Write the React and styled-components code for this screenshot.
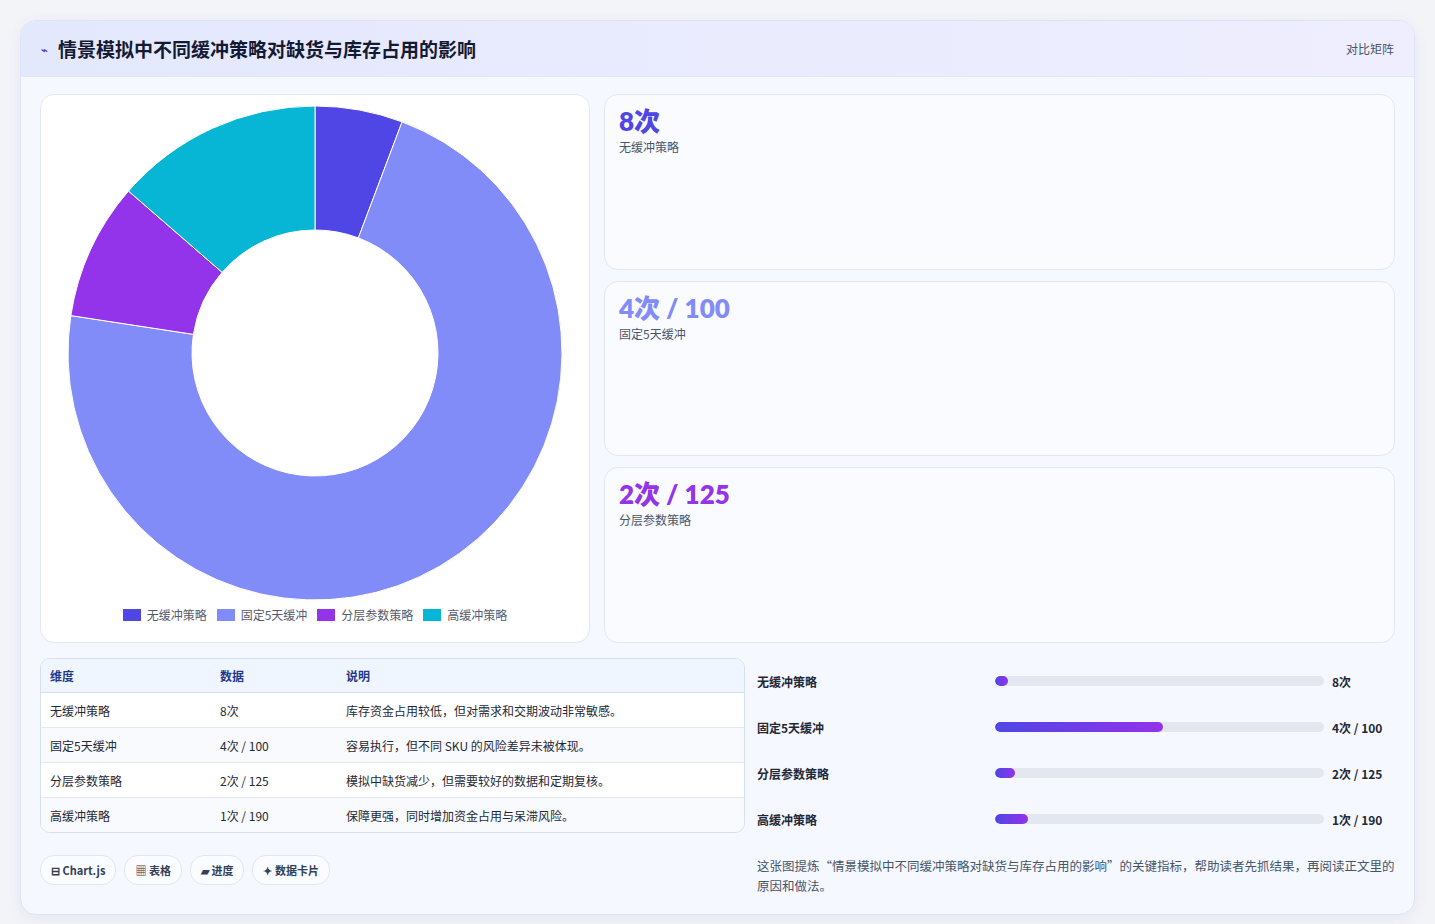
import React from "react";
import styled, { createGlobalStyle } from "styled-components";

const Global = createGlobalStyle`
  body{margin:0;background:#f3f4f8;font-family:"Noto Sans CJK SC","Noto Sans",sans-serif;color:#1e293b;}
`;
const Page = styled.div`padding:20px 20px 22px 20px;`;
const Card = styled.div`
  background:#f6f8ff;border:1px solid #dfe3f7;border-radius:16px;overflow:hidden;
  box-shadow:0 4px 14px rgba(80,90,160,.08);
`;
const Header = styled.div`
  height:55px;display:flex;align-items:center;justify-content:space-between;padding:0 20px 0 20px;
  background:linear-gradient(90deg,#e4e8fd,#eeeefe);border-bottom:1px solid #e3e6f6;
`;
const Title = styled.h1`margin:0;font-size:19px;font-weight:700;color:#141a33;display:flex;align-items:center;gap:10px;`;
const Mark = styled.span`color:#4f46e5;font-size:11px;`;
const HeaderRight = styled.span`font-size:12px;color:#475569;`;
const Body = styled.div`padding:17px 19px 18px 19px;display:flex;flex-direction:column;gap:15px;`;
const Top = styled.div`display:grid;grid-template-columns:550px 1fr;gap:14px;height:549px;`;
const Panel = styled.div`background:#fff;border:1px solid #e3e7f3;border-radius:14px;`;
const ChartPanel = styled(Panel)`display:flex;flex-direction:column;align-items:center;padding-top:11px;`;
const Legend = styled.div`display:flex;gap:10px;margin-top:6px;font-size:12px;color:#555b6e;`;
const LegItem = styled.span`display:flex;align-items:center;gap:6px;`;
const Swatch = styled.i`width:18px;height:12px;background:${p=>p.c};display:inline-block;`;
const Stats = styled.div`display:grid;grid-template-rows:1fr 1fr 1fr;gap:11px;`;
const Stat = styled(Panel)`background:#f9fbff;padding:10px 14px;`;
const StatVal = styled.div`font-family:Lato,"Noto Sans CJK SC",sans-serif;font-size:26px;font-weight:800;color:${p=>p.c};line-height:32px;`;
const StatLbl = styled.div`font-size:12px;color:#4b5568;margin-top:1px;`;
const Bottom = styled.div`display:grid;grid-template-columns:705px 1fr;gap:12px;`;
const Left = styled.div`display:flex;flex-direction:column;gap:22px;`;
const Table = styled.table`
  width:100%;border-collapse:separate;border-spacing:0;border:1px solid #d7deed;border-radius:10px;overflow:hidden;font-size:12px;background:#fff;
  th{background:#f0f6ff;color:#1e3a8a;font-weight:600;text-align:left;height:33px;padding:0 9px;border-bottom:1px solid #d7deed;}
  td{height:34px;padding:0 9px;border-bottom:1px solid #e5e9f2;color:#1f2937;}
  tr:nth-child(even) td{background:#f8fafd;}
  tr:last-child td{border-bottom:none;}
`;
const Chips = styled.div`display:flex;gap:8px;`;
const Chip = styled.span`font-size:11px;font-weight:600;color:#334155;padding:0 10px;height:28px;display:flex;align-items:center;border:1px solid #e2e6ef;border-radius:14px;background:#fbfcff;`;
const Right = styled.div`display:flex;flex-direction:column;`;
const BarRow = styled.div`display:grid;grid-template-columns:238px 329px 1fr;align-items:center;height:46px;font-size:12px;font-weight:600;color:#1f2937;gap:0;&>b{padding-left:8px;font-weight:700}`;
const Track = styled.div`height:10px;border-radius:5px;background:#e3e8f0;overflow:hidden;`;
const Fill = styled.div`height:100%;border-radius:5px;background:linear-gradient(90deg,#4f46e5,#9333ea);`;
const Note = styled.p`margin:14px 0 0;font-size:12.5px;line-height:20px;color:#475569;`;

const slices=[["#4f46e5",8],["#818cf8",100],["#9333ea",12.5],["#06b6d4",19]];
function Donut(){
  const tot=slices.reduce((a,s)=>a+s[1],0);const cx=247,cy=247,R=247,r=123;
  let a0=0;
  const pt=(a,rr)=>[cx+rr*Math.sin(a),cy-rr*Math.cos(a)];
  return <svg width="494" height="494">{slices.map(([c,v],i)=>{
    const a1=a0+v/tot*2*Math.PI;const l=a1-a0>Math.PI?1:0;
    const [x0,y0]=pt(a0,R),[x1,y1]=pt(a1,R),[x2,y2]=pt(a1,r),[x3,y3]=pt(a0,r);
    const d=`M${x0} ${y0}A${R} ${R} 0 ${l} 1 ${x1} ${y1}L${x2} ${y2}A${r} ${r} 0 ${l} 0 ${x3} ${y3}Z`;
    a0=a1;return <path key={i} d={d} fill={c} stroke="#fff" strokeWidth="1"/>;
  })}</svg>;
}
const rows=[["无缓冲策略","8次","库存资金占用较低，但对需求和交期波动非常敏感。",4],["固定5天缓冲","4次 / 100","容易执行，但不同 SKU 的风险差异未被体现。",51],["分层参数策略","2次 / 125","模拟中缺货减少，但需要较好的数据和定期复核。",6],["高缓冲策略","1次 / 190","保障更强，同时增加资金占用与呆滞风险。",10]];
export default function App(){
  return <Page><Global/><Card>
    <Header><Title><Mark>⌁</Mark>情景模拟中不同缓冲策略对缺货与库存占用的影响</Title><HeaderRight>对比矩阵</HeaderRight></Header>
    <Body>
      <Top>
        <ChartPanel><Donut/>
          <Legend>{[["#4f46e5","无缓冲策略"],["#818cf8","固定5天缓冲"],["#9333ea","分层参数策略"],["#06b6d4","高缓冲策略"]].map(([c,t])=><LegItem key={t}><Swatch c={c}/>{t}</LegItem>)}</Legend>
        </ChartPanel>
        <Stats>
          <Stat><StatVal c="#4f46e5">8次</StatVal><StatLbl>无缓冲策略</StatLbl></Stat>
          <Stat><StatVal c="#818cf8">4次 / 100</StatVal><StatLbl>固定5天缓冲</StatLbl></Stat>
          <Stat><StatVal c="#9333ea">2次 / 125</StatVal><StatLbl>分层参数策略</StatLbl></Stat>
        </Stats>
      </Top>
      <Bottom>
        <Left>
          <Table><thead><tr><th style={{width:152}}>维度</th><th style={{width:108}}>数据</th><th>说明</th></tr></thead>
            <tbody>{rows.map(r=><tr key={r[0]}><td>{r[0]}</td><td>{r[1]}</td><td>{r[2]}</td></tr>)}</tbody></Table>
          <Chips><Chip>⊟ Chart.js</Chip><Chip>▦ 表格</Chip><Chip>▰ 进度</Chip><Chip>✦ 数据卡片</Chip></Chips>
        </Left>
        <Right>
          {rows.map(r=><BarRow key={r[0]}><span>{r[0]}</span><Track><Fill style={{width:r[3]+"%"}}/></Track><b>{r[1]}</b></BarRow>)}
          <Note>这张图提炼“情景模拟中不同缓冲策略对缺货与库存占用的影响”的关键指标，帮助读者先抓结果，再阅读正文里的原因和做法。</Note>
        </Right>
      </Bottom>
    </Body>
  </Card></Page>;
}
